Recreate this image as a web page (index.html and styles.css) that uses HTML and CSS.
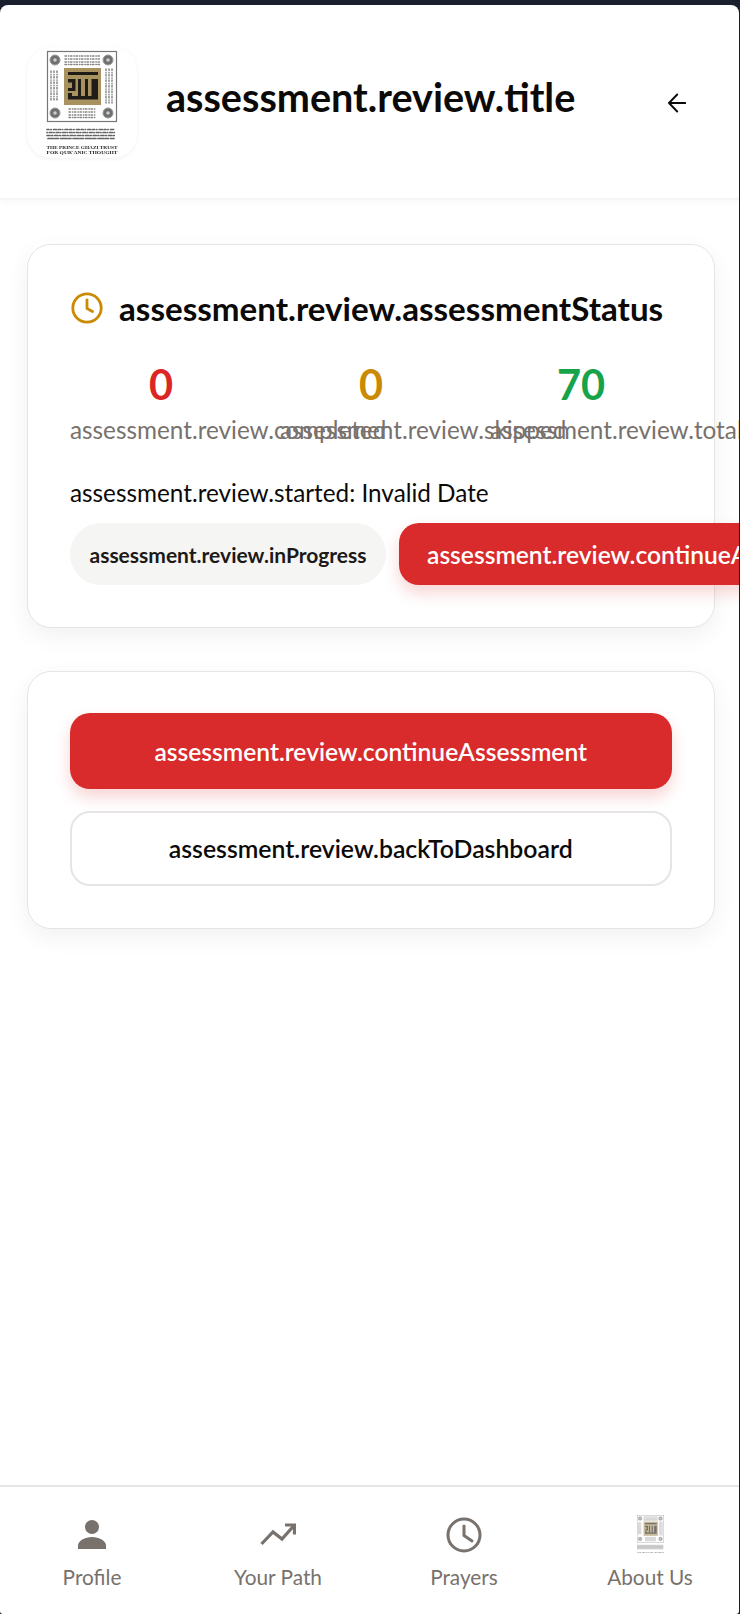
FILE: index.html
```html
<!DOCTYPE html>
<html lang="en">
<head>
<meta charset="utf-8">
<title>assessment.review.title</title>
<link rel="stylesheet" href="styles.css">
</head>
<body>
<svg class="defs" width="0" height="0" aria-hidden="true">
  <symbol id="trust-logo" viewBox="0 0 110 111">
    <rect x="20.500" y="4.500" width="69" height="70" fill="#fff" stroke="#777" stroke-width="1.200"/>
    <g fill="#6f6f6f" stroke="#999" stroke-width="1">
      <circle cx="28" cy="13" r="5"/><circle cx="81" cy="13" r="5"/><circle cx="28" cy="66" r="5"/><circle cx="81" cy="66" r="5"/>
    </g>
    <g fill="#ccc"><circle cx="28" cy="13" r="1.800"/><circle cx="81" cy="13" r="1.800"/><circle cx="28" cy="66" r="1.800"/><circle cx="81" cy="66" r="1.800"/></g>
    <g stroke="#333" fill="none" opacity=".6" stroke-linecap="round">
      <path stroke-width="1.500" stroke-dasharray="1.400 2 .4 1.700" d="M38 9h35M38 12h35M38 15h35M38 17.500h35M42 62h27M42 65h27M42 68h27M42 70.500h27"/>
      <path stroke-width="1.500" stroke-dasharray="1.400 2 .4 1.700" d="M24 24v30M27 24v30M30 24v30M79 22v34M82 22v34M85 22v34"/>
    </g>
    <rect x="37" y="21" width="37" height="37" fill="#a8925f"/>
    <path fill="#1f1b16" d="M41 25h30v3h-30zM41 32h7.500v12h-7.500v-3h4v-5.500h-4zM51 32h3v17h-3zM58 32h3v17h-3zM64.500 32h6.500v20.500h-30v-6.500h4v3h19.500z"/>
    <g stroke="#222" fill="none" opacity=".7" stroke-linecap="round">
      <path stroke-width="1.700" stroke-dasharray="2 1.900 .4 2.300 3 1.800" d="M20 82.500h68"/>
      <path stroke-width="1.700" stroke-dasharray=".4 2 2.600 1.700" d="M20 85.500h69"/>
      <path stroke-width="1.700" stroke-dasharray="3 1.700 1 2" d="M20 88.500h69"/>
      <path stroke-width="1.700" stroke-dasharray="6 1.500 3 2" d="M21 91.500h66"/>
    </g>
    <text class="logo-text" x="19.500" y="102" textLength="71" lengthAdjust="spacingAndGlyphs">THE PRINCE GHAZI TRUST</text>
    <text class="logo-text" x="19.500" y="107" textLength="71" lengthAdjust="spacingAndGlyphs">FOR QUR'ANIC THOUGHT</text>
  </symbol>
</svg>
<div class="app">
  <header class="top">
    <div class="logo-box"><svg class="logo" viewBox="0 0 110 111"><use href="#trust-logo" width="110" height="111"/></svg></div>
    <h1 class="title">assessment.review.title</h1>
    <svg class="back" viewBox="0 0 18 20" fill="none" stroke="#0c0a09" stroke-width="1.900" stroke-linecap="round" stroke-linejoin="round"><path d="M17.500 10H1.200M9.200 1.500 1 10l8.200 8.500"/></svg>
  </header>
  <main class="content">
    <section class="card">
      <div class="head">
        <svg class="clock" viewBox="0 0 32 32" fill="none" stroke="#ca8a04" stroke-width="2.800" stroke-linecap="round" stroke-linejoin="round"><circle cx="16" cy="16" r="14.200"/><path d="M16 8v8.500l5.500 3"/></svg>
        <h2 class="head-title">assessment.review.assessmentStatus</h2>
      </div>
      <div class="stats">
        <div class="stat"><div class="value red">0</div><div class="label">assessment.review.completed</div></div>
        <div class="stat"><div class="value amber">0</div><div class="label">assessment.review.skipped</div></div>
        <div class="stat"><div class="value green">70</div><div class="label">assessment.review.total</div></div>
      </div>
      <p class="started">assessment.review.started: Invalid Date</p>
      <div class="actions">
        <span class="badge">assessment.review.inProgress</span>
        <button class="btn btn-red btn-inline">assessment.review.continueAssessment</button>
      </div>
    </section>
    <section class="card card-buttons">
      <button class="btn btn-red btn-wide">assessment.review.continueAssessment</button>
      <button class="btn btn-white">assessment.review.backToDashboard</button>
    </section>
  </main>
  <nav class="tabs">
    <div class="tab">
      <svg class="tab-icon" viewBox="0 0 36 36" fill="#78716c"><circle cx="18" cy="10" r="7"/><path d="M4 32v-3.500C4 24 11 20 18 20s14 4 14 8.500V32z"/></svg>
      <span class="tab-label">Profile</span>
    </div>
    <div class="tab">
      <svg class="tab-icon" viewBox="0 0 36 36" fill="none" stroke="#78716c" stroke-width="3.200"><path d="M1.500 27 13 15l9 7 12.500-14"/><path d="M25 8h9.500v9.500"/></svg>
      <span class="tab-label">Your Path</span>
    </div>
    <div class="tab">
      <svg class="tab-icon" viewBox="0 0 36 36" fill="none" stroke="#78716c" stroke-width="3" stroke-linecap="round"><circle cx="18" cy="18" r="16"/><path d="M18 9v9.500l8 5.500"/></svg>
      <span class="tab-label">Prayers</span>
    </div>
    <div class="tab">
      <svg class="tab-logo" viewBox="20 4 70 101"><use href="#trust-logo" width="110" height="111"/></svg>
      <span class="tab-label">About Us</span>
    </div>
  </nav>
</div>
</body>
</html>
```
FILE: styles.css
```css
* { box-sizing: border-box; }
html, body { margin: 0; height: 100%; }
body {
  background: #1a1f2e;
  font-family: "Lato", "Liberation Sans", sans-serif;
  color: #0c0a09;
  overflow: hidden;
}
.defs { position: absolute; }
.logo-text { font-family: "Liberation Serif", serif; font-size: 5px; font-weight: 700; fill: #222; }
.app {
  margin-top: 5px;
  width: 739px;
  height: 1609px;
  background: #fff;
  border-radius: 8px 8px 3px 3px;
  display: flex;
  flex-direction: column;
  overflow: hidden;
}
.top {
  height: 195px;
  flex: none;
  display: flex;
  align-items: center;
  padding: 0 53px 0 27px;
  border-bottom: 2px solid #f5f5f4;
  box-shadow: 0 2px 6px rgba(0, 0, 0, .03);
}
.logo-box {
  width: 110px;
  height: 111px;
  border-radius: 24px;
  background: #fff;
  box-shadow: 0 1px 4px rgba(0, 0, 0, .06);
  flex: none;
  margin-top: 2px;
}
.logo { display: block; width: 110px; height: 111px; filter: blur(.35px); }
.title {
  margin: 0 0 10px 29px;
  flex: 1;
  font-size: 39.600px;
  font-weight: 700;
  line-height: 48px;
  white-space: nowrap;
}
.back { width: 18px; height: 20px; flex: none; margin-top: 3px; }
.content {
  flex: 1;
  padding: 44px 24.500px 0 27px;
  display: flex;
  flex-direction: column;
  gap: 43px;
}
.card {
  border: 1px solid #e7e5e4;
  border-radius: 24px;
  background: #fff;
  padding: 41px 42px 42px;
  box-shadow: 0 8px 24px rgba(0, 0, 0, .06);
}
.head { display: flex; align-items: center; gap: 16px; height: 46px; margin-top: -1px; }
.clock { width: 32px; height: 32px; flex: none; margin-left: 1px; }
.head-title {
  margin: 0;
  font-size: 33.150px;
  font-weight: 700;
  line-height: 46px;
  white-space: nowrap;
}
.stats {
  display: grid;
  grid-template-columns: repeat(3, 182px);
  gap: 28px;
  margin-top: 29px;
}
.stat { min-width: 0; }
.value { font-size: 41.500px; font-weight: 700; line-height: 48px; text-align: center; }
.red { color: #dc2626; }
.amber { color: #ca8a04; }
.green { color: #16a34a; }
.label {
  font-size: 24.300px;
  line-height: 32px;
  color: #78716c;
  white-space: nowrap;
  margin-top: 6px;
}
.started { margin: 31px 0 0; font-size: 24.300px; line-height: 32px; }
.actions { display: flex; gap: 13px; margin-top: 14px; }
.badge {
  flex: none;
  height: 62px;
  border-radius: 31px;
  background: #f5f5f4;
  padding: 0 19.500px;
  display: flex;
  align-items: center;
  font-size: 21px;
  font-weight: 700;
  color: #1c1917;
  white-space: nowrap;
}
.btn {
  font-family: inherit;
  font-size: 24.600px;
  font-weight: 600;
  border-radius: 20px;
  white-space: nowrap;
  cursor: pointer;
}
.btn-red {
  background: #d92b2b;
  color: #fff;
  border: 0;
  box-shadow: 0 8px 16px rgba(220, 38, 38, .2);
}
.btn-inline { flex: none; height: 62px; padding: 0 28px; }
.card-buttons { display: flex; flex-direction: column; gap: 22px; }
.btn-wide { height: 76px; width: 100%; }
.btn-white {
  height: 75px;
  width: 100%;
  font-size: 24.800px;
  background: #fff;
  color: #0c0a09;
  border: 2px solid #e7e5e4;
}
.tabs {
  flex: none;
  height: 129px;
  margin-left: -1px;
  display: grid;
  grid-template-columns: repeat(4, 186px);
  border-top: 2px solid #e7e5e4;
  padding-top: 30px;
}
.tab { display: flex; flex-direction: column; align-items: center; }
.tab-icon { width: 36px; height: 36px; }
.tab-logo { opacity: .62; filter: blur(.4px); width: 27px; height: 39px; margin: -2px 0 -1px; }
.tab-label { font-size: 20.800px; line-height: 28px; color: #78716c; margin-top: 10px; }
```
